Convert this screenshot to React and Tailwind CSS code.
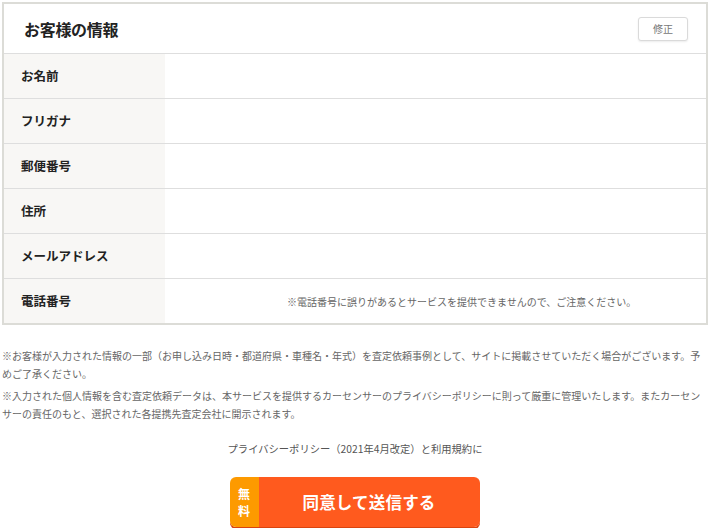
import React from 'react';

const rows = [
  { label: 'お名前' },
  { label: 'フリガナ' },
  { label: '郵便番号' },
  { label: '住所' },
  { label: 'メールアドレス' },
  { label: '電話番号', note: '※電話番号に誤りがあるとサービスを提供できませんので、ご注意ください。' },
];

const App = () => {
  return (
    <div
      className="w-[713px] min-h-[528px] bg-white pl-[2px] pr-[5px] pt-[2px] text-[#333]"
      style={{ fontFamily: '"Noto Sans CJK JP", "Noto Sans", sans-serif' }}
    >
      <div className="border-2 border-[#dcdcd7] bg-white">
        <div className="h-[49px] flex items-center justify-between pl-[20px] pr-[18px]">
          <h2 className="text-[16px] font-bold tracking-[-0.3px] text-[#222] leading-none">お客様の情報</h2>
          <button className="w-[50px] h-[24px] rounded-[3px] border border-[#dadada] bg-white text-[10px] text-[#777] shadow-[0_1px_2px_rgba(0,0,0,0.08)]">
            修正
          </button>
        </div>
        {rows.map(r => (
          <div key={r.label} className="flex h-[45px] border-t border-[#dedede]">
            <div className="w-[161px] shrink-0 bg-[#f8f7f5] flex items-center pl-[17px] text-[12.5px] font-bold text-[#222]">
              {r.label}
            </div>
            <div className="flex-1 flex items-center pl-[122px] text-[10px] text-[#666]">
              {r.note}
            </div>
          </div>
        ))}
      </div>

      <div className="mt-[22px] text-[10px] leading-[18px] text-[#666] whitespace-nowrap">
        <p>※お客様が入力された情報の一部（お申し込み日時・都道府県・車種名・年式）を査定依頼事例として、サイトに掲載させていただく場合がございます。予<br />めご了承ください。</p>
        <p className="mt-[4px]">※入力された個人情報を含む査定依頼データは、本サービスを提供するカーセンサーのプライバシーポリシーに則って厳重に管理いたします。またカーセン<br />サーの責任のもと、選択された各提携先査定会社に開示されます。</p>
      </div>

      <p className="mt-[17px] text-center text-[10.3px] leading-[18px] text-[#555]">
        プライバシーポリシー（2021年4月改定）と利用規約に
      </p>

      <div className="mt-[19px] flex justify-center pr-[1px]">
        <button className="w-[250px] h-[50px] flex rounded-[6px] overflow-hidden shadow-[0_2px_0_#d9440f]">
          <span className="w-[29px] h-full bg-[#fd9a00] flex flex-col items-center justify-center gap-[3px] text-white font-bold text-[12px] leading-[14px]">
            <span>無</span>
            <span>料</span>
          </span>
          <span className="flex-1 h-full bg-[#ff5a1e] flex items-center justify-center text-white font-bold text-[16.5px] tracking-[0.2px]">
            同意して送信する
          </span>
        </button>
      </div>
    </div>
  );
};

export default App;
